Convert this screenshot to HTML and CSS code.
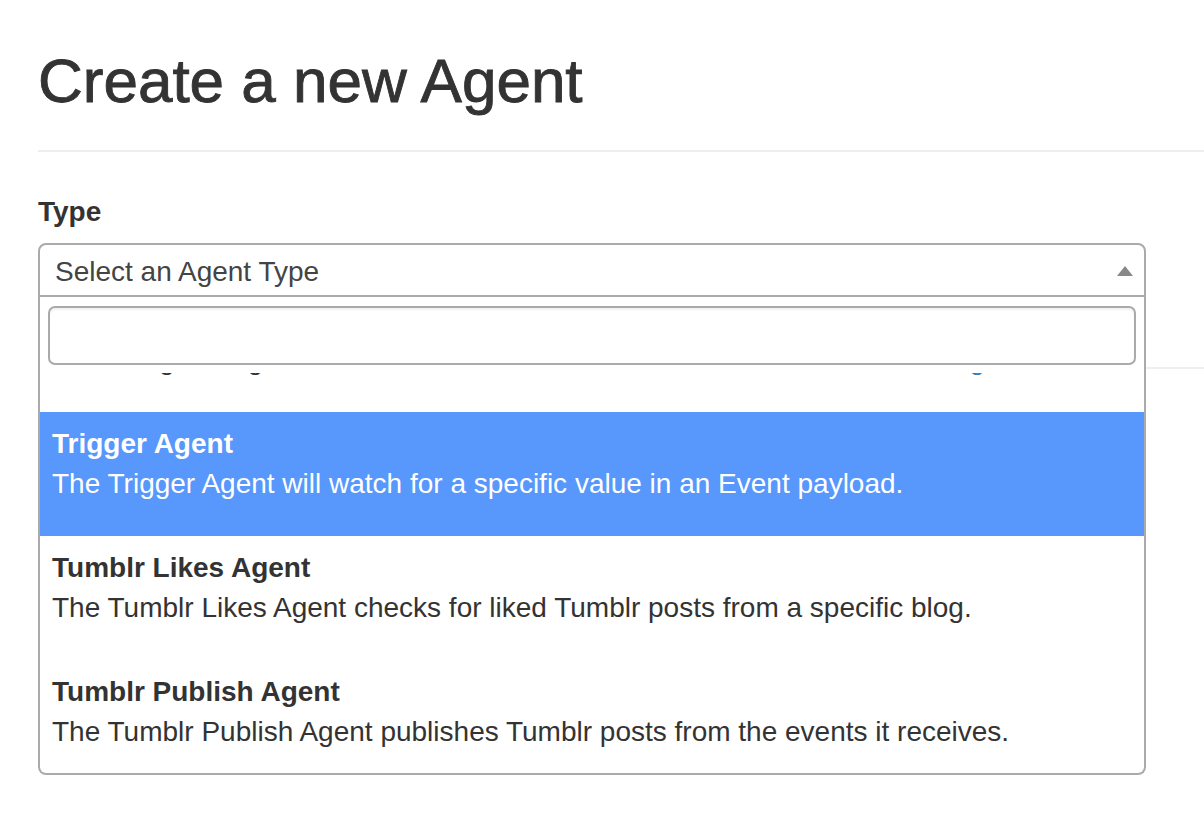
FILE: index.html
```html
<!DOCTYPE html>
<html lang="en">
<head>
<meta charset="utf-8">
<title>Create a new Agent</title>
<link rel="stylesheet" href="styles.css">
</head>
<body>
<div class="page">
  <h1 class="page-header">Create a new Agent</h1>
  <div class="form-group">
    <label class="field-label">Type</label>
    <div class="select-wrap">
      <div class="selection">
        <span class="selection-text">Select an Agent Type</span>
        <span class="arrow"></span>
      </div>
      <div class="dropdown">
        <div class="search">
          <input class="search-field" type="text" aria-label="Search">
        </div>
        <div class="results">
          <ul class="result-list">
            <li class="option">
              <div class="opt-title">Telegram Agent</div>
              <div class="opt-desc">The Telegram Agent receives and collects events and sends them via <a class="link" href="#">Telegram</a>.</div>
            </li>
            <li class="option highlighted">
              <div class="opt-title">Trigger Agent</div>
              <div class="opt-desc">The Trigger Agent will watch for a specific value in an Event payload.</div>
            </li>
            <li class="option">
              <div class="opt-title">Tumblr Likes Agent</div>
              <div class="opt-desc">The Tumblr Likes Agent checks for liked Tumblr posts from a specific blog.</div>
            </li>
            <li class="option">
              <div class="opt-title">Tumblr Publish Agent</div>
              <div class="opt-desc">The Tumblr Publish Agent publishes Tumblr posts from the events it receives.</div>
            </li>
            <li class="option">
              <div class="opt-title">Twilio Agent</div>
              <div class="opt-desc">The Twilio Agent receives and collects events and sends them via text message.</div>
            </li>
          </ul>
        </div>
      </div>
    </div>
  </div>
  <hr class="divider">
</div>
</body>
</html>
```

FILE: styles.css
```css
* { box-sizing: border-box; }
html, body { margin: 0; padding: 0; background: #fff; }
body {
  font-family: "Liberation Sans", Arial, Helvetica, sans-serif;
  color: #333;
  font-size: 28px;
}
.page {
  padding: 47px 0 0 38px;
  height: 830px;
  overflow: hidden;
}
.page-header {
  margin: 0;
  padding-bottom: 36px;
  font-size: 62px;
  font-weight: 400;
  line-height: 67px;
  color: #333;
  -webkit-text-stroke: 0.9px #333;
  border-bottom: 2px solid #eee;
}
.form-group {
  margin-top: 40px;
  margin-bottom: 70px;
  width: 1108px;
}
.field-label {
  display: block;
  font-weight: 700;
  font-size: 28px;
  line-height: 40px;
  margin-bottom: 11px;
}
.select-wrap {
  position: relative;
}
.selection {
  height: 54px;
  border: 2px solid #aaa;
  border-radius: 8px 8px 0 0;
  display: flex;
  align-items: flex-start;
  justify-content: space-between;
  padding: 4px 11px 0 15px;
  background: #fff;
}
.selection-text {
  line-height: 46px;
  color: #444;
}
.arrow {
  width: 0;
  height: 0;
  margin-top: 17px;
  border-style: solid;
  border-width: 0 8px 10px 8px;
  border-color: transparent transparent #888 transparent;
}
.dropdown {
  position: absolute;
  top: 100%;
  left: 0;
  width: 100%;
  background: #fff;
  border: 2px solid #aaa;
  border-top: 0;
  border-radius: 0 0 8px 8px;
  z-index: 10;
}
.search {
  padding: 9px 8px 8px 8px;
}
.search-field {
  display: block;
  width: 100%;
  height: 59px;
  border: 2px solid #aaa;
  border-radius: 7px;
  box-shadow: inset 0 2px 2px rgba(0,0,0,0.06);
  font: inherit;
  padding: 0 10px;
  outline: none;
  background: #fff;
}
.results {
  height: 400px;
  overflow: hidden;
}
.result-list {
  list-style: none;
  margin: -85px 0 0 0;
  padding: 0;
}
.option {
  padding: 12px;
  color: #333;
}
.opt-title {
  font-weight: 700;
  line-height: 40px;
}
.opt-desc {
  line-height: 40px;
  margin-bottom: 20px;
  white-space: nowrap;
}
.highlighted {
  background: #5897fb;
  color: #fff;
}
.link {
  color: #337ab7;
  text-decoration: none;
}
.divider {
  margin: 0;
  border: 0;
  border-top: 2px solid #eee;
}
```
